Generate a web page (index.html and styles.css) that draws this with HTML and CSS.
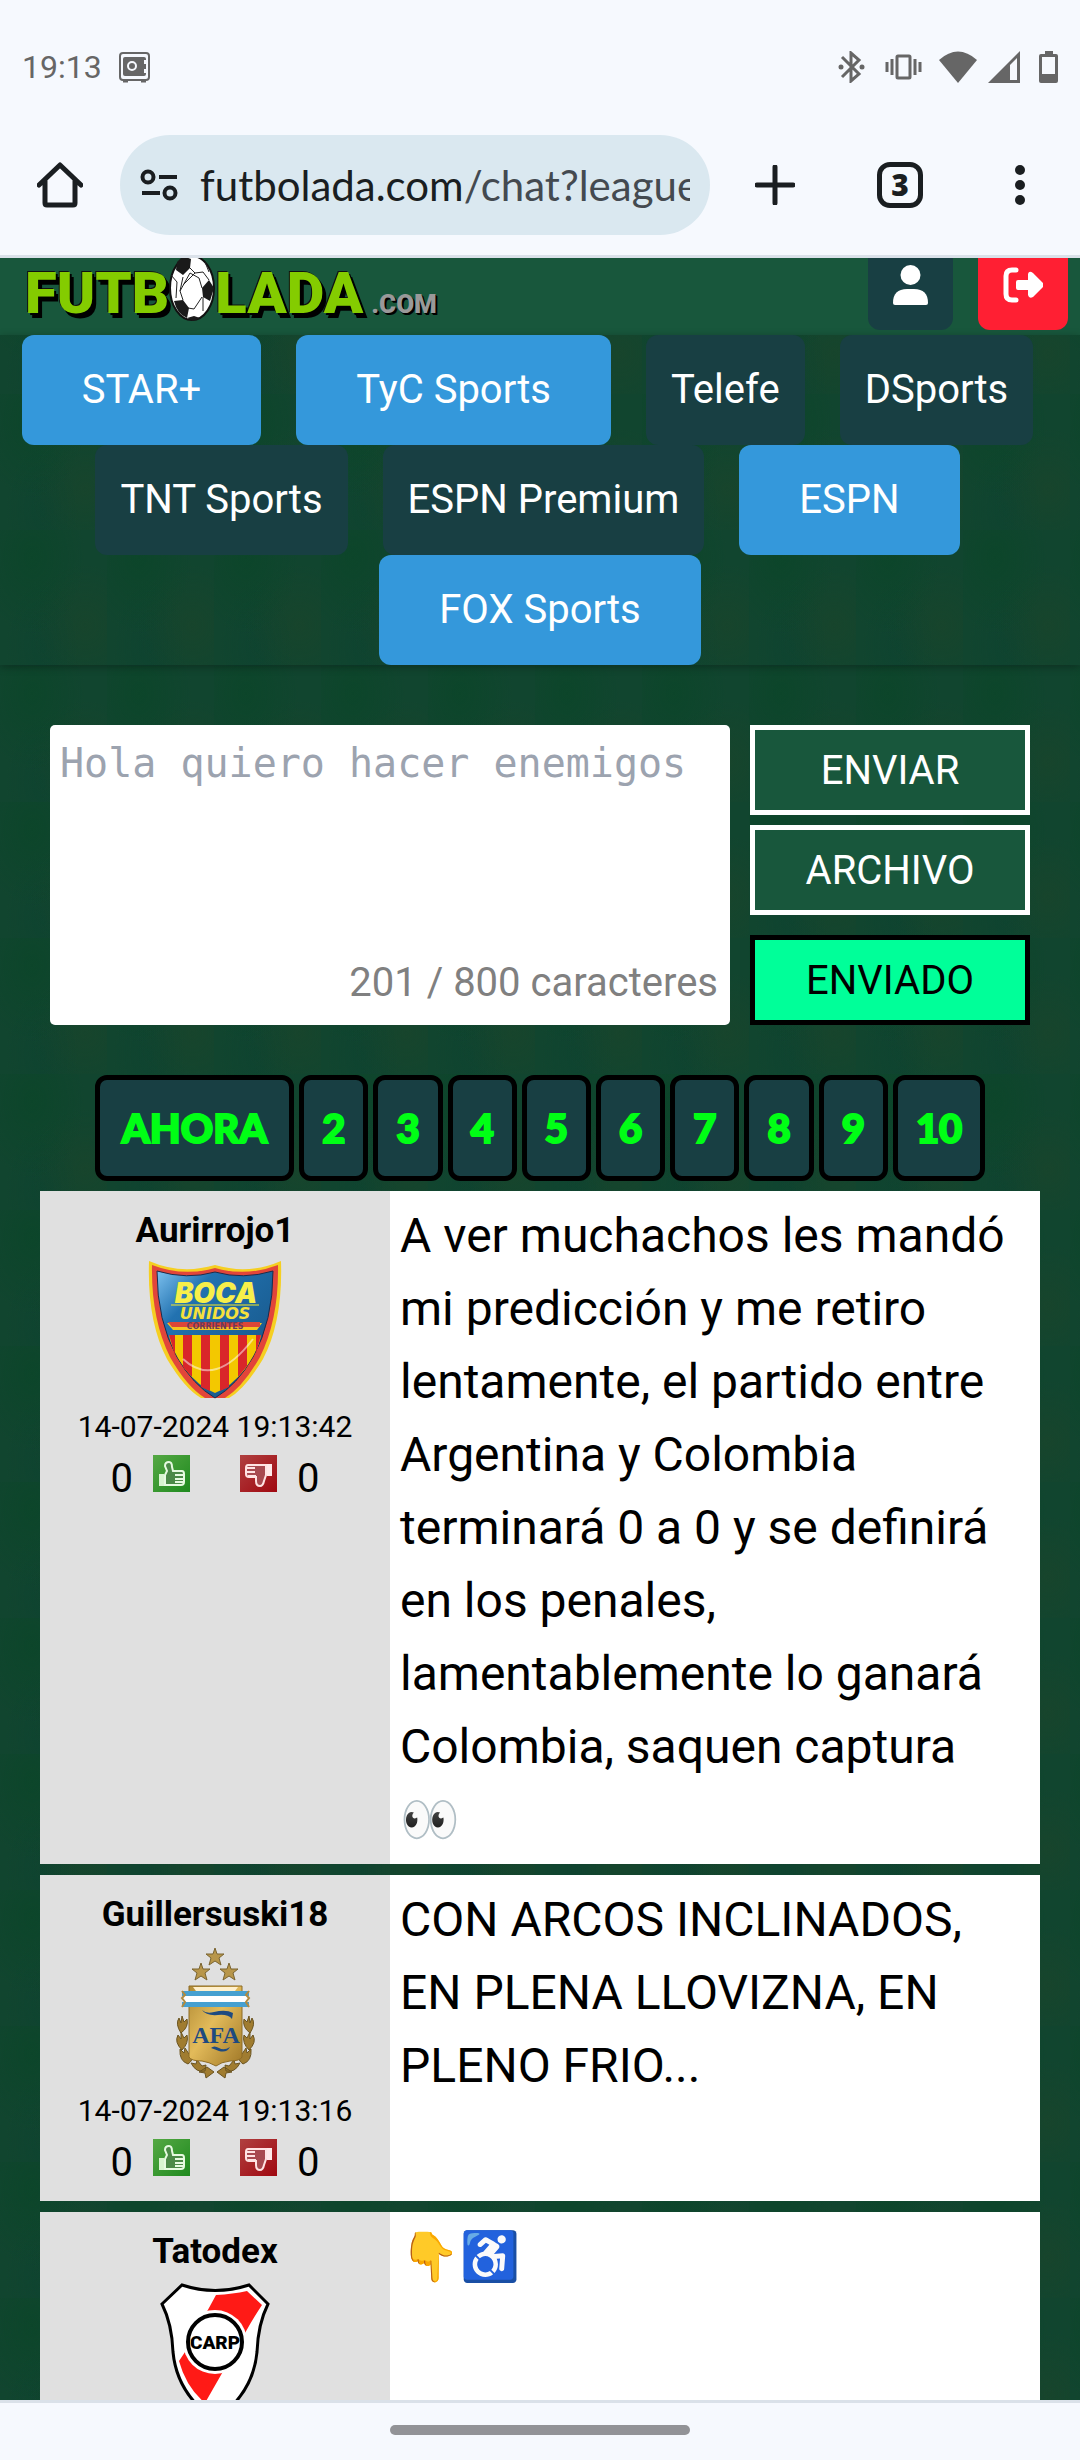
FILE: index.html
```html
<!DOCTYPE html>
<html lang="es">
<head>
<meta charset="utf-8">
<meta name="viewport" content="width=device-width, initial-scale=1">
<title>Futbolada - Chat</title>
<link rel="stylesheet" href="styles.css">
</head>
<body>
<svg class="defs" aria-hidden="true">
  <defs>
    <linearGradient id="gold" x1="0" x2="1" y1="0" y2="1"><stop offset="0" stop-color="#b08a35"/><stop offset=".45" stop-color="#e3bb5a"/><stop offset="1" stop-color="#a07828"/></linearGradient>
    <linearGradient id="blue" x1="0" x2="1" y1="0" y2="1"><stop offset="0" stop-color="#7cc0ee"/><stop offset=".25" stop-color="#2272b0"/><stop offset="1" stop-color="#14507f"/></linearGradient>
    <linearGradient id="up" x1="0" x2="1" y1="0" y2="1"><stop offset="0" stop-color="#55a844"/><stop offset="1" stop-color="#1f8a1f"/></linearGradient>
    <linearGradient id="down" x1="0" x2="1" y1="0" y2="1"><stop offset="0" stop-color="#b04040"/><stop offset="1" stop-color="#a00810"/></linearGradient>
    <symbol id="thumb-up" viewBox="0 0 37 37">
      <rect width="37" height="37" fill="url(#up)"/>
      <path d="M6 19h5v12H6z" fill="#d8f4d0"/>
      <path d="M12 30V20q1-2 2-4l-2-5q0-4 4-4 3 0 3 5l1 4h9q2 0 2 3v8q0 3-3 3z" fill="#4c8a48" stroke="#e6fae0" stroke-width="2"/>
      <path d="M22 20h9M22 24h9M22 27h9" stroke="#e6fae0" stroke-width="2"/>
    </symbol>
    <symbol id="thumb-down" viewBox="0 0 37 37">
      <rect width="37" height="37" fill="url(#down)"/>
      <path d="M27 9h5v12h-5z" fill="#ffe9e9"/>
      <path d="M26 10H8q-2 0-2 3v6q0 3 3 3h7v4q0 5 4 5 3 0 4-5l2-6z" fill="#a84a50" stroke="#ffe3e3" stroke-width="2"/>
      <path d="M6 13h9M6 17h9M8 21h8" stroke="#ffe3e3" stroke-width="2"/>
    </symbol>
  </defs>
</svg>

<div class="screen">
  <header class="statusbar">
    <div class="status-left">
      <time>19:13</time>
      <svg width="31" height="31" viewBox="0 0 31 31"><rect x="1" y="1" width="29" height="27" rx="3" fill="none" stroke="#666" stroke-width="2"/><rect x="4" y="5" width="23" height="19" rx="2" fill="#666"/><circle cx="13" cy="14" r="4" fill="none" stroke="#f6f9fe" stroke-width="2"/><path d="M26 8v4M26 17v4" stroke="#f6f9fe" stroke-width="2"/><path d="M4 29h5M22 29h5" stroke="#666" stroke-width="3"/></svg>
    </div>
    <div class="status-right">
      <svg width="37" height="32" viewBox="0 0 37 32"><path d="M4 6l17 17-8 7V2l8 7L4 26" fill="none" stroke="#666" stroke-width="3"/><circle cx="3" cy="16" r="2.500" fill="#666"/><circle cx="24" cy="16" r="2.500" fill="#666"/></svg>
      <svg width="44" height="32" viewBox="0 0 44 32"><rect x="12" y="5" width="13" height="22" rx="1" fill="none" stroke="#666" stroke-width="3"/><path d="M2 11v10M7 8v16M30 8v16M35 11v10" stroke="#666" stroke-width="3"/></svg>
      <svg width="39" height="32" viewBox="0 0 39 32"><path d="M0 9Q19-8 38 9L19 32z" fill="#666"/></svg>
      <svg width="41" height="32" viewBox="0 0 41 32"><path d="M0 32L32 0v32z" fill="#666"/><path d="M22 14l7-7v22h-7z" fill="#f6f9fe"/></svg>
      <svg width="20" height="32" viewBox="0 0 20 32"><path d="M6 0h8v3h3q2 0 2 2v25q0 2-2 2H2q-2 0-2-2V5q0-2 2-2h4zM3 6v17h13V6z" fill="#666" fill-rule="evenodd"/></svg>
    </div>
  </header>

  <div class="toolbar">
    <button class="tool" aria-label="Inicio"><svg width="46" height="46" viewBox="0 0 46 46"><path d="M2 23L23 3l21 20M8 19v22q0 2 2 2h26q2 0 2-2V19" fill="none" stroke="#1a1e21" stroke-width="5" stroke-linejoin="round" stroke-linecap="round"/></svg></button>
    <button class="url">
      <svg width="40" height="32" viewBox="0 0 40 32" fill="none" stroke="#1a1e21" stroke-width="4"><circle cx="8" cy="8" r="5.500"/><path d="M19 8h18M2 24h18"/><circle cx="30" cy="24" r="5.500"/></svg>
      <span class="address">futbolada.com<span class="path">/chat?league</span></span>
    </button>
    <button class="tool tool-wide" aria-label="Nueva pestaña"><svg width="40" height="40" viewBox="0 0 40 40"><path d="M20 2v36M2 20h36" stroke="#1a1e21" stroke-width="5" stroke-linecap="round"/></svg></button>
    <button class="tool"><span class="tabs">3</span></button>
    <button class="tool" aria-label="Menú"><svg width="10" height="40" viewBox="0 0 10 40" fill="#1a1e21"><circle cx="5" cy="5" r="5"/><circle cx="5" cy="20" r="5"/><circle cx="5" cy="35" r="5"/></svg></button>
  </div>

  <div class="site">
    <header class="site-header">
      <a class="logo" href="#"><span>FUTB</span><svg class="ball" width="46" height="66" viewBox="0 0 46 66"><ellipse cx="23" cy="33" rx="22" ry="32" fill="#fff" stroke="#111" stroke-width="2"/><g fill="#1a1a1a"><path d="M8 7L14 1l8 3-1 9-7 7-7-5zM33 33l7-8 5 8-4 13-7-4zM5 46l9-1 6 8-2 10Q8 59 5 46zM31 63l-6-2-7 2 6 3z"/></g><path d="M21 13l5 5 8-1 6 8M33 42l-8 12-6-1M14 45l-3-9 3-14M26 18L14 30M2 20l6 7-1 16M34 42l0 14M11 36l10-18 9 5 3 10M36 7l4 10" fill="none" stroke="#222" stroke-width="1"/></svg><span>LADA</span><span class="dotcom">.COM</span></a>
      <div class="account">
        <button class="user" aria-label="Perfil"><svg width="35" height="40" viewBox="0 0 35 40" fill="#fff"><circle cx="17.500" cy="10" r="10"/><path d="M0 38Q0 24 14 24h7q14 0 14 14 0 2-2 2H2q-2 0-2-2z"/></svg></button>
        <button class="logout" aria-label="Salir"><svg width="40" height="36" viewBox="0 0 40 36"><path d="M13 3H9Q3 3 3 9v18q0 6 6 6h4" fill="none" stroke="#fff" stroke-width="5" stroke-linecap="round"/><path d="M15 13h10V7q1-4 5-1l10 10q1 2 0 4L30 30q-4 2-5-2v-5H15q-2 0-2-2v-6q0-2 2-2z" fill="#fff"/></svg></button>
      </div>
    </header>

    <nav class="channels">
      <a class="live" href="#">STAR+</a>
      <a class="live" href="#">TyC Sports</a>
      <a href="#">Telefe</a>
      <a href="#">DSports</a>
      <a href="#">TNT Sports</a>
      <a href="#">ESPN Premium</a>
      <a class="live" href="#">ESPN</a>
      <a class="live" href="#">FOX Sports</a>
    </nav>

    <form class="composer">
      <div class="entry">
        <textarea aria-label="Mensaje" placeholder="Hola quiero hacer enemigos"></textarea>
        <span class="counter">201 / 800 caracteres</span>
      </div>
      <div class="actions">
        <button type="button">ENVIAR</button>
        <button type="button">ARCHIVO</button>
        <button type="button" class="sent">ENVIADO</button>
      </div>
    </form>

    <nav class="pages">
      <a class="now" href="#">AHORA</a><a href="#">2</a><a href="#">3</a><a href="#">4</a><a href="#">5</a><a href="#">6</a><a href="#">7</a><a href="#">8</a><a href="#">9</a><a href="#">10</a>
    </nav>

    <main class="messages">
      <article class="message">
        <aside class="author">
          <strong>Aurirrojo1</strong>
          <svg class="crest" viewBox="0 0 140 140" role="img" aria-label="Boca Unidos">
            <path d="M4 0Q36 14 70 4 104 14 136 0 138 60 118 98 100 128 84 137H56Q40 128 22 98 2 60 4 0z" fill="#f5cf22"/>
            <path d="M7 4Q38 16 70 7 102 16 133 4 134 58 115 96 98 126 80 137H60Q42 126 25 96 6 58 7 4z" fill="#e2453a"/>
            <path d="M12 10Q42 19 70 11 98 19 128 10 128 60 108 96 92 124 70 137 48 124 32 96 12 60 12 10z" fill="url(#blue)" stroke="#1b2c4c" stroke-width="1"/>
            <path d="M24 74H116Q114 88 100 108 86 126 70 132 54 126 40 108 26 88 24 74z" fill="#f3c800"/>
            <path d="M24 74h6v20zM38 74h9v42l-9-10zM56 74h9v56l-9-4zM75 74h9v52l-9 4zM93 74h9v31l-9 11zM111 74h5l-5 18z" fill="#d9262a"/>
            <path d="M38 98Q70 128 108 78" fill="none" stroke="#fff" stroke-opacity=".5" stroke-width="2"/>
            <path d="M22 62H117l-5 7H28z" fill="#f6c51f"/><path d="M23 61h92v5H27z" fill="#dc4638"/>
            <path d="M26 44h88" stroke="#f4e829" stroke-width="1"/>
            <text x="71" y="42" class="boca">BOCA</text><text x="70" y="58" class="unidos">UNIDOS</text><text x="70" y="68" class="corrientes">CORRIENTES</text>
          </svg>
          <time>14-07-2024 19:13:42</time>
          <div class="votes"><span>0</span><button aria-label="Me gusta"><svg width="37" height="37"><use href="#thumb-up"/></svg></button><button aria-label="No me gusta"><svg width="37" height="37"><use href="#thumb-down"/></svg></button><span>0</span></div>
        </aside>
        <p>A ver muchachos les mandó mi predicción y me retiro lentamente, el partido entre Argentina y Colombia terminará 0 a 0 y se definirá en los penales, lamentablemente lo ganará Colombia, saquen captura 👀</p>
      </article>

      <article class="message">
        <aside class="author">
          <strong>Guillersuski18</strong>
          <svg class="crest" viewBox="0 0 140 140" role="img" aria-label="AFA">
            <g fill="#b8964a" stroke="#7a6430" stroke-width="1"><path id="star" d="M70 3l2 6h7l-5 4 2 7-6-4-6 4 2-7-5-4h7z"/><use href="#star" x="-14" y="15"/><use href="#star" x="14" y="15"/></g>
            <g fill="#a07c30" stroke="#6b5420" stroke-width="1"><path id="laurel" d="M36 88q-6-9-2-15l2 5 1-7 2 6 3-3q2 8-6 14zM37 105q-8-8-4-15l3 4v-7l3 6 3-3q2 8-5 15zM43 119q-9-3-8-15l4 4 1-5 4 6 3-1q2 7-4 11zM60 126q-9 2-14-8l5 1 1-4 5 6 4-1zM69 127l-8 6-1-5-6-1 8-5z"/><use href="#laurel" transform="matrix(-1 0 0 1 141 0)"/></g>
            <path d="M44 41h53v71q-2 4-12 4-9 1-14 5-7-4-14-5-11 0-13-4z" fill="url(#gold)" stroke="#8c6a24" stroke-width="1"/>
            <path d="M48 42h45l-3 4H51z" fill="#fff0cc"/>
            <path d="M37 46h67l-2 4 2 5-2 3 2 4H37l2-4-2-3 2-5z" fill="#fff"/><path d="M37 46h67v5H37zM37 57h67v5H37z" fill="#46a0d0"/>
            <path d="M37 46l3 4-3 3 3 4-3 5M104 46l-3 4 3 3-3 4 3 5" fill="none" stroke="#b08a40" stroke-width="2"/>
            <path d="M57 65q4 4 12 2 12-3 19 1l-1 6q-4-5-14-4-12 1-16-5zM66 103q3-3 8 0t11-1q-3 6-11 4-5-2-8-3z" fill="#1e4a80"/>
            <text x="71" y="98" class="afa">AFA</text>
          </svg>
          <time>14-07-2024 19:13:16</time>
          <div class="votes"><span>0</span><button aria-label="Me gusta"><svg width="37" height="37"><use href="#thumb-up"/></svg></button><button aria-label="No me gusta"><svg width="37" height="37"><use href="#thumb-down"/></svg></button><span>0</span></div>
        </aside>
        <p>CON ARCOS INCLINADOS, EN PLENA LLOVIZNA, EN PLENO FRIO...</p>
      </article>

      <article class="message">
        <aside class="author">
          <strong>Tatodex</strong>
          <svg class="crest" viewBox="0 0 140 140" role="img" aria-label="River Plate">
            <path d="M37 3Q70 14 104 3L123 22Q113 42 112 70 108 112 70 138 32 112 28 70 27 42 17 22z" fill="#fff" stroke="#000" stroke-width="3"/>
            <path d="M71 13Q88 12 102 9L117 23Q109 35 100 51L60 121Q41 105 34 79L40 70z" fill="#ff1a16"/>
            <circle cx="70" cy="60" r="32" fill="#fff"/>
            <circle cx="70" cy="60" r="27" fill="none" stroke="#000" stroke-width="4"/>
            <text x="70" y="67" class="carp">CARP</text>
          </svg>
        </aside>
        <p>👇♿</p>
      </article>
    </main>
  </div>
  <footer class="gesture"><span></span></footer>
</div>
</body>
</html>
```
FILE: styles.css
```css
* { box-sizing: border-box; }
body { margin: 0; font-family: Roboto, "Noto Sans", sans-serif; color: #000; }
button { border: 0; padding: 0; background: none; font: inherit; color: inherit; }
a { color: inherit; text-decoration: none; }
svg { display: block; flex: none; }
.defs { position: absolute; width: 0; height: 0; }

.screen { display: flex; flex-direction: column; height: 100vh; background: #f6f9fe; }

/* Phone status bar */
.statusbar { flex: none; height: 115px; padding: 19px 21px 0 22px; display: flex; justify-content: space-between; align-items: center; color: #666; font-size: 32px; }
.status-left { display: flex; align-items: center; gap: 17px; }
.status-right { display: flex; gap: 10px; }

/* Browser toolbar */
.toolbar { flex: none; display: flex; align-items: center; padding: 20px 0; border-bottom: 3px solid #dae1e9; color: #1a1e21; }
.tool { flex: none; width: 120px; height: 46px; display: flex; align-items: center; justify-content: center; }
.tool-wide { width: 130px; }
.tabs { width: 46px; height: 46px; border: 5px solid #1a1e21; border-radius: 13px; font: 900 30px/36px "Noto Sans", sans-serif; text-align: center; }
.url { flex: 1; min-width: 0; height: 100px; padding: 0 20px; display: flex; align-items: center; gap: 20px; border-radius: 50px; background: #dae8f0; }
.address { overflow: hidden; white-space: nowrap; font: 42px/60px Lato, sans-serif; }
.path { color: #444a50; }

/* Visible part of the page */
.site {
  flex: 1; min-height: 0; overflow: hidden;
  background-color: #11452f;
  background-image:
    radial-gradient(ellipse at 30% 20%, rgba(6, 70, 36, .45), transparent 50%),
    radial-gradient(ellipse at 80% 70%, rgba(32, 68, 40, .4), transparent 45%),
    radial-gradient(ellipse at 40% 85%, rgba(8, 64, 50, .3), transparent 40%);
  background-size: 107px 136px, 107px 136px, 107px 136px;
}
.site-header { height: 77px; padding: 0 12px 5px 25px; display: flex; justify-content: space-between; align-items: flex-end; overflow: hidden; background: #18573c; }
.logo { display: flex; align-items: flex-end; font: 900 58px/60px Roboto, sans-serif; color: #84cc00; text-shadow: 2px 2px 0 #000, 4px 5px 0 #000, -1px -1px 0 #111; }
.logo span { margin-bottom: 7px; }
.ball { margin-bottom: 9px; }
.logo .dotcom { margin: 0 0 11px 8px; font-size: 26px; line-height: 30px; color: #999; text-shadow: 1px 1px 0 #000, 2px 2px 0 #000; }
.account { display: flex; gap: 25px; }
.account button { height: 90px; padding: 0 25px; border-radius: 12px; }
.user { background: #183f43; }
.logout { background: #ff1f33; }

.channels { display: flex; flex-wrap: wrap; justify-content: center; column-gap: 10px; font-size: 40px; line-height: 60px; color: #fff; box-shadow: 0 2px 8px rgba(0, 0, 0, .3); }
.channels a { padding: 25px; margin-right: 25px; border-radius: 12px; background: #183f43; }
.channels .live { padding: 25px 60px; background: #3498db; }
.channels a:last-child { margin-right: 0; }

.composer { display: grid; grid-template-columns: 1fr 280px; gap: 20px; padding: 60px 50px 50px; font-size: 40px; }
.entry { position: relative; display: flex; }
.entry textarea { flex: 1; width: 100%; height: 300px; padding: 8px 10px; border: 0; border-radius: 5px; resize: none; background: #fff; font: 40px/60px "DejaVu Sans Mono", monospace; }
.entry textarea::placeholder { color: #9ca3af; opacity: 1; }
.counter { position: absolute; right: 12px; bottom: 12px; line-height: 60px; color: #808080; }
.actions { display: flex; flex-direction: column; gap: 10px; }
.actions button { height: 90px; border: 5px solid #fff; background: #18573c; color: #fff; }
.actions .sent { margin-top: 10px; border-color: #000; background: #00ff99; color: #000; }

.pages { display: flex; justify-content: center; gap: 5px; padding: 0 40px 10px; font: 900 40px/60px Lato, sans-serif; color: #00ff15; -webkit-text-stroke: 2px #00ff15; }
.pages a { padding: 18px; border: 5px solid #000; border-radius: 12px; background: #183f43; }
.pages .now { padding: 18px 22px; }

.messages { display: flex; flex-direction: column; gap: 11px; padding: 0 40px; }
.message { display: grid; grid-template-columns: 350px 1fr; min-height: 326px; background: #fff; }
.message p { margin: 0; padding: 8px 24px 8px 10px; font-size: 48px; line-height: 73px; }
.author { display: flex; flex-direction: column; align-items: center; padding: 13px 0 8px; background: #e0e0e0; }
.author strong { font-size: 35px; line-height: 54px; }
.author time { font-size: 30px; line-height: 45px; }
.crest { width: 140px; height: 140px; margin: 3px 0; }
.votes { display: flex; align-items: baseline; gap: 20px; font-size: 40px; line-height: 60px; }
.votes button + button { margin-left: 30px; }

.boca { font: italic 900 28px Inter, sans-serif; fill: #f7ef4a; text-anchor: middle; }
.unidos { font: italic 700 16px "DejaVu Sans", sans-serif; fill: #f5e03c; text-anchor: middle; }
.corrientes { font: 700 8px "DejaVu Sans", sans-serif; fill: #6b3a5a; text-anchor: middle; }
.afa { font: 700 24px "Liberation Serif", serif; fill: #1e4a80; text-anchor: middle; }
.carp { font: 900 19px Roboto, sans-serif; text-anchor: middle; }

.gesture { flex: none; height: 60px; padding-top: 22px; border-top: 3px solid #dae1e9; background: #f6f9fe; }
.gesture span { display: block; width: 300px; height: 10px; margin: 0 auto; border-radius: 5px; background: #929397; }
```
